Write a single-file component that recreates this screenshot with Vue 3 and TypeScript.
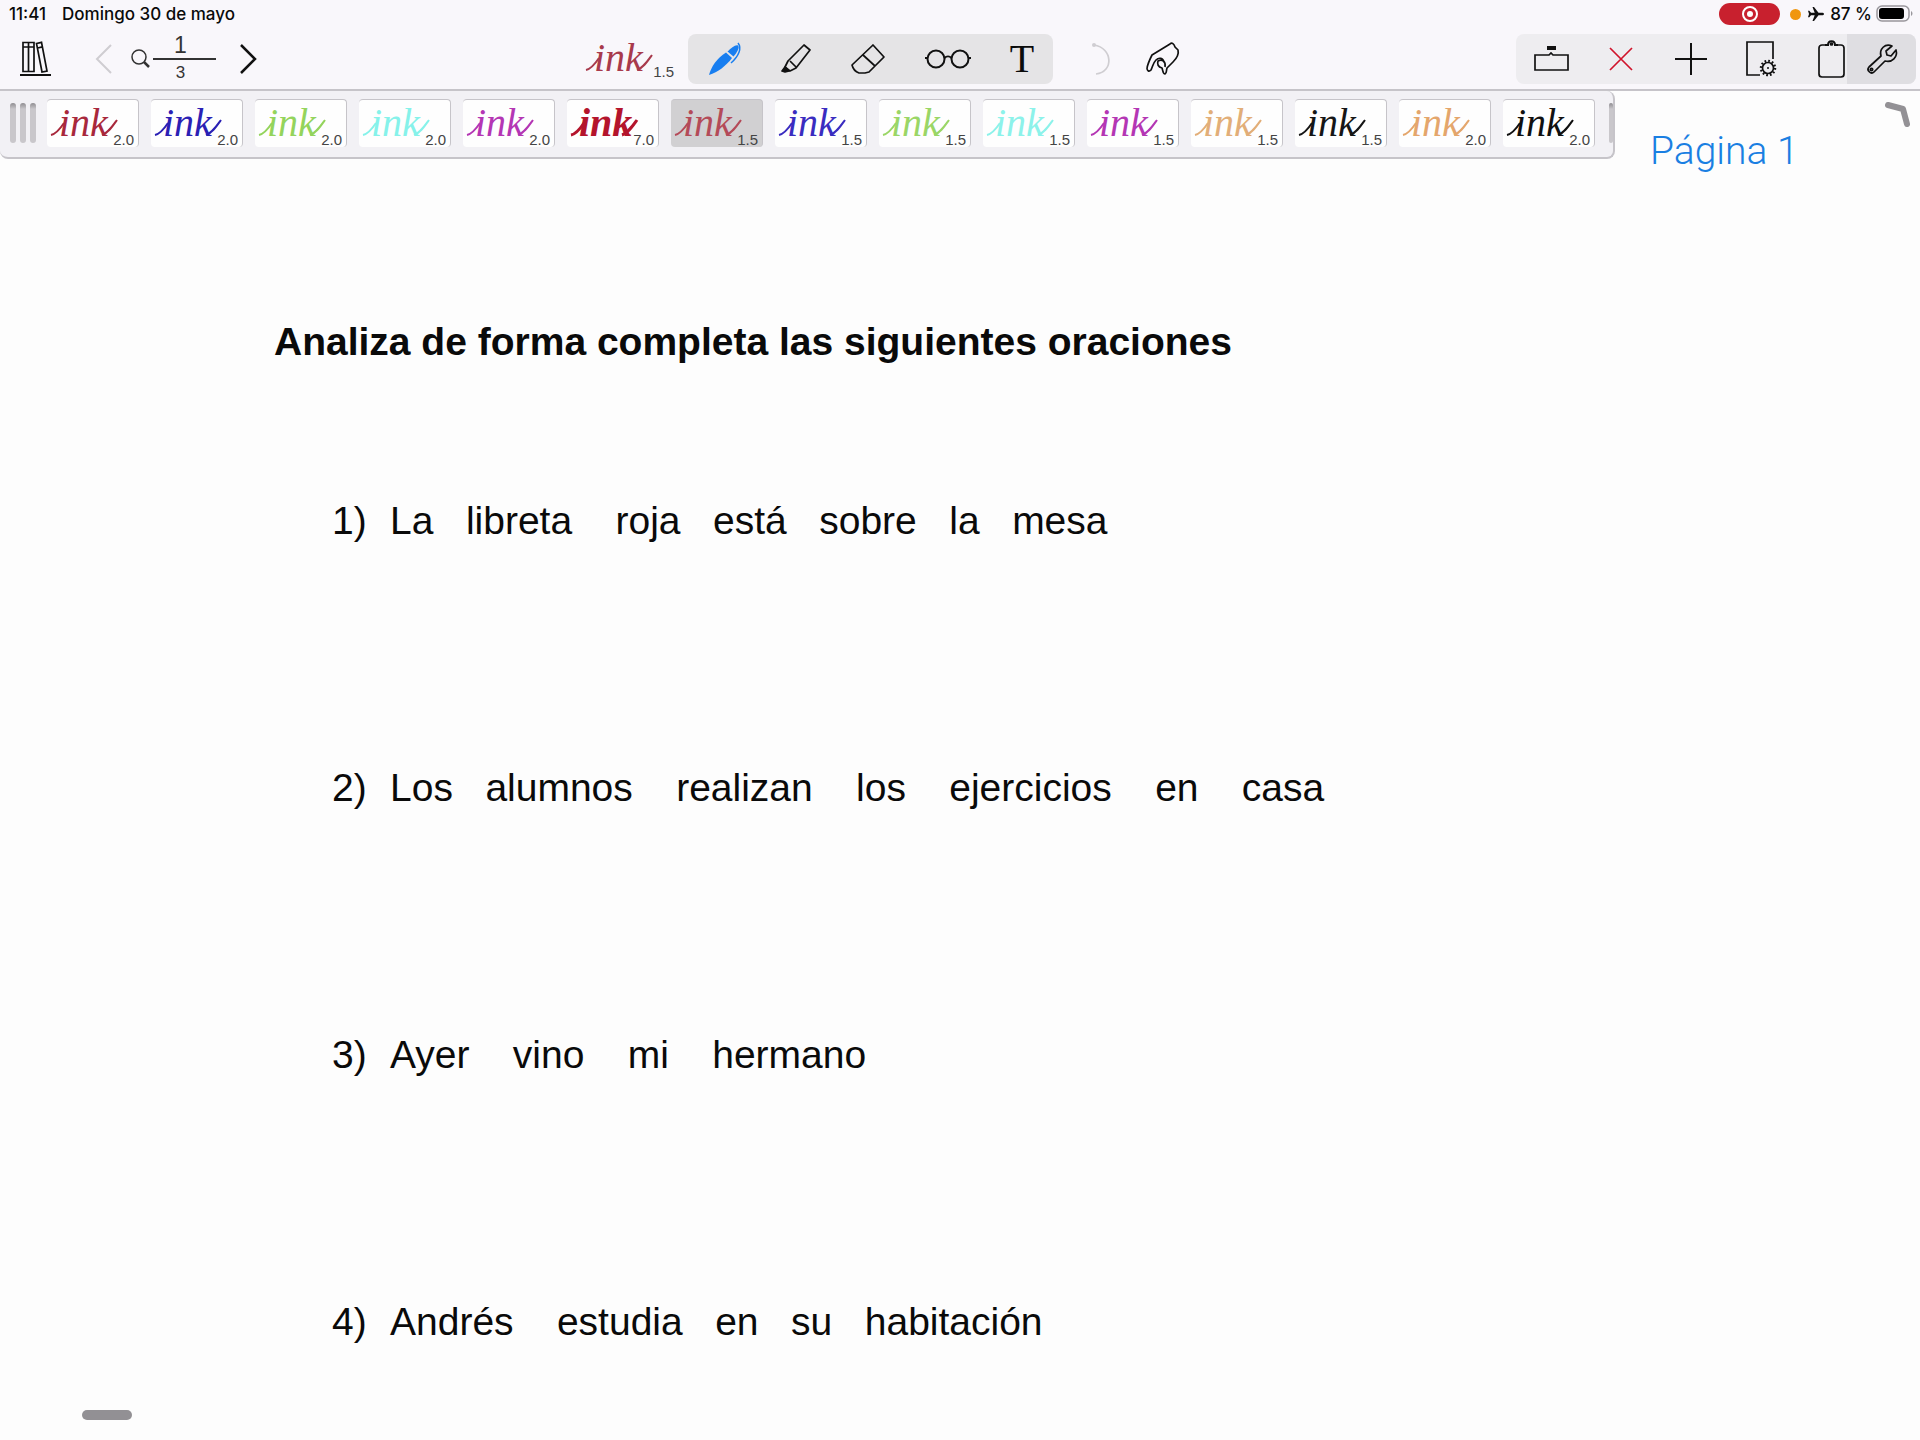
<script setup lang="ts">
import { ref } from 'vue'

interface Pen {
  color: string
  width: string
}

const pens: Pen[] = [
  { color: '#a8283c', width: '2.0' },
  { color: '#2a20b4', width: '2.0' },
  { color: '#94d45c', width: '2.0' },
  { color: '#86f2ea', width: '2.0' },
  { color: '#b436b4', width: '2.0' },
  { color: '#b4142c', width: '7.0' },
  { color: '#b44a58', width: '1.5' },
  { color: '#3a2cc0', width: '1.5' },
  { color: '#9ad666', width: '1.5' },
  { color: '#8cf2ea', width: '1.5' },
  { color: '#b436b4', width: '1.5' },
  { color: '#e2ae78', width: '1.5' },
  { color: '#161616', width: '1.5' },
  { color: '#e4a66c', width: '2.0' },
  { color: '#101010', width: '2.0' },
]

const selected = ref(6)

const sentences: string[] = [
  'La   libreta    roja   está   sobre   la   mesa',
  'Los   alumnos    realizan    los    ejercicios    en    casa',
  'Ayer    vino    mi    hermano',
  'Andrés    estudia   en   su   habitación',
]
</script>

<template>
  <div class="app">
    <header class="top">
      <div class="status">
        <time>11:41</time>
        <span class="date">Domingo 30 de mayo</span>
        <span class="record">
          <svg width="18" height="18" viewBox="0 0 18 18" fill="none" stroke="#fff" stroke-width="2">
            <circle cx="9" cy="9" r="7" /><circle cx="9" cy="9" r="3" fill="#fff" stroke="none" />
          </svg>
        </span>
        <span class="dot"></span>
        <svg class="plane" width="16" height="16" viewBox="0 0 16 16" fill="#111">
          <path d="M16 8c0-.8-1-1.300-2-1.300h-3.500L6 1H4.500l2.200 5.700H3L1.300 4.700H0L1 8l-1 3.300h1.300L3 9.300h3.700L4.500 15H6l4.500-5.700H14c1 0 2-.5 2-1.300z" />
        </svg>
        <span class="percent">87 %</span>
        <svg width="38" height="18" viewBox="0 0 38 18">
          <rect x="1" y="1" width="32" height="15" rx="5" fill="none" stroke="#99979c" stroke-width="1.500" />
          <rect x="3" y="3" width="25" height="11" rx="3" fill="#000" />
          <path d="M35 6c2 1 2 4 0 5z" fill="#99979c" />
        </svg>
      </div>

      <nav class="toolbar">
        <button class="library" aria-label="Biblioteca">
          <svg width="31" height="35" viewBox="0 0 31 35" fill="none" stroke="#111" stroke-width="1.700">
            <path d="M3 1.500h5.500v29H3zM8.500 1.500H14v29H8.500zM3 6h11M16.500 2.500l5-1.200L27 30l-5 1zM17.500 7l5-1.200" />
            <path d="M0 34h31" stroke-width="2" />
          </svg>
        </button>
        <button class="previous" aria-label="Página anterior">
          <svg width="17" height="30" viewBox="0 0 17 30" fill="none" stroke="#cfcdd1" stroke-width="2"><path d="M16 1 2 15l14 14" /></svg>
        </button>
        <button class="pages" aria-label="Buscar página">
          <svg width="19" height="19" viewBox="0 0 19 19" fill="none" stroke="#333" stroke-width="1.500">
            <circle cx="8" cy="8" r="7" /><path d="m13 13 5 5" stroke-width="2.500" />
          </svg>
          <span class="fraction"><span class="current">1</span><span class="total">3</span></span>
        </button>
        <button class="next" aria-label="Página siguiente">
          <svg width="17" height="30" viewBox="0 0 17 30" fill="none" stroke="#111" stroke-width="2.500"><path d="m1 1 14 14L1 29" /></svg>
        </button>

        <button class="sample active-pen">
          <span class="ink">ink</span>
          <svg class="swash" width="66" height="36" viewBox="0 0 66 36" fill="none" stroke="currentColor">
            <path d="M0 31c5-1 9-6 13-12M51 31c6-2 10-8 15-15" />
          </svg>
          <span class="size">1.5</span>
        </button>

        <div class="tools">
          <button aria-label="Pluma">
            <svg width="32" height="32" viewBox="0 0 32 32" fill="#187ef0">
              <path d="M0 32C2 24 8 15 17 9.500l6 5.500C17 23 9 29 0 32z" />
              <path d="M18.500 8.500C22 5 27 1 29 2.500c2 2-1 7-4.500 11z" />
              <path d="M29 0c4 5 1 13-7 20" fill="none" stroke="#187ef0" stroke-width="1.500" />
            </svg>
          </button>
          <button aria-label="Marcador">
            <svg width="30" height="32" viewBox="0 0 30 32" fill="none" stroke="#111" stroke-width="1.700" stroke-linejoin="round">
              <path d="M23 2 7 18l-3 6 5 4 6-3L29 7zM9 18l6 6" />
              <path d="m4 24-3 4 3 1 4-1z" fill="#111" />
            </svg>
          </button>
          <button aria-label="Goma">
            <svg width="34" height="32" viewBox="0 0 34 32" fill="none" stroke="#111" stroke-width="1.700" stroke-linejoin="round">
              <path d="M22 2 1 22c1 4 4 7 7 8h6l4-1 15-15zM12 12l12 11" />
            </svg>
          </button>
          <button aria-label="Lectura">
            <svg width="46" height="20" viewBox="0 0 46 20" fill="none" stroke="#111" stroke-width="2">
              <circle cx="11" cy="10" r="8.500" /><circle cx="35" cy="10" r="8.500" />
              <path d="M19.500 9c2-2 5-2 7 0M0 9h3M43 9h3" />
            </svg>
          </button>
          <button class="letter" aria-label="Texto">T</button>
        </div>

        <button class="undo" aria-label="Deshacer">
          <svg width="20" height="34" viewBox="0 0 20 34" fill="none" stroke="#cfcdd1" stroke-width="1.700">
            <path d="M3 3c19 3 20 27 2 29" /><circle cx="3" cy="3" r="2" fill="#cfcdd1" stroke="none" />
          </svg>
        </button>
        <button class="hand" aria-label="Gestos">
          <svg width="34" height="34" viewBox="0 0 34 34" fill="none" stroke="#111" stroke-width="1.700" stroke-linejoin="round">
            <path d="M1 26C2 21 4 17 6 13L24 2c2-2 4 0 5 3l3 3c1 4-2 9-5 12l-6 6c-1 3 0 5-2 6-2 0-2-3-3-6-4-1-5-4-4-7 4-2 8 0 7 6M10 18c-3 3-3 6-5 10-2 2-4 1-4-2M10 18c3-3 7-2 8 2" />
          </svg>
        </button>

        <div class="actions">
          <button aria-label="Cajón">
            <svg width="35" height="25" viewBox="0 0 35 25" fill="none" stroke="#111" stroke-width="1.700">
              <path d="M1 9h14l2-2 2 2h15v15H1z" /><path d="M13 0h9v4h-9z" fill="#111" stroke="none" />
            </svg>
          </button>
          <button aria-label="Eliminar">
            <svg width="24" height="24" viewBox="0 0 24 24" fill="none" stroke="#d0142c" stroke-width="1.700"><path d="m1 1 22 22M23 1 1 23" /></svg>
          </button>
          <button aria-label="Añadir">
            <svg width="32" height="32" viewBox="0 0 32 32" fill="none" stroke="#111" stroke-width="2"><path d="M16 0v32M0 16h32" /></svg>
          </button>
          <button aria-label="Ajustes de página">
            <svg width="30" height="36" viewBox="0 0 30 36" fill="none" stroke="#111" stroke-width="1.700">
              <path d="M14 34H1V1h26v17" />
              <circle cx="22" cy="27" r="5.500" /><circle cx="22" cy="27" r="7" stroke-width="2.500" stroke-dasharray="1.700 1.965" />
              <circle cx="22" cy="27" r="1" fill="#111" stroke="none" />
            </svg>
          </button>
          <button class="clipboard" aria-label="Portapapeles">
            <svg width="27" height="38" viewBox="0 0 27 38" fill="none" stroke="#111" stroke-width="1.700">
              <path d="M7 5H4a3 3 0 0 0-3 3v26a3 3 0 0 0 3 3h19a3 3 0 0 0 3-3V8a3 3 0 0 0-3-3h-3" />
              <path d="M7 5h3c0-5 7-5 7 0h3" stroke-width="2" /><circle cx="13.500" cy="4" r="1" />
            </svg>
          </button>
          <button class="wrench" aria-label="Herramientas">
            <svg width="30" height="30" viewBox="0 0 30 30" fill="none" stroke="#111" stroke-width="1.700" stroke-linejoin="round">
              <path d="M2 23 14 12C12 5 18-1 25 2l-6 5 1 4 4 1 5-6c2 7-4 13-11 11L7 28c-3 3-8-2-5-5z" />
              <circle cx="4.500" cy="25.500" r="1.200" />
            </svg>
          </button>
        </div>
      </nav>
    </header>

    <div class="strip">
      <div class="palette">
        <div class="grip"><i></i><i></i><i></i></div>
        <button
          v-for="(pen, index) in pens"
          :key="index"
          class="sample card"
          :class="{ selected: index === selected, heavy: pen.width === '7.0' }"
          :style="{ color: pen.color }"
          @click="selected = index"
        >
          <span class="ink">ink</span>
          <svg class="swash" width="66" height="36" viewBox="0 0 66 36" fill="none" stroke="currentColor">
            <path d="M0 31c5-1 9-6 13-12M51 31c6-2 10-8 15-15" />
          </svg>
          <span class="size">{{ pen.width }}</span>
        </button>
        <i class="edge"></i>
      </div>
      <a class="page-link" href="#page-1">Página 1</a>
      <svg class="corner" width="26" height="28" viewBox="0 0 26 28" fill="none" stroke="#939195" stroke-width="6" stroke-linecap="round" stroke-linejoin="round">
        <path d="m4 4 15 4 4 15" />
      </svg>
    </div>

    <main id="page-1" class="paper">
      <h1>Analiza de forma completa las siguientes oraciones</h1>
      <ol>
        <li v-for="(sentence, index) in sentences" :key="index">
          <span class="number">{{ index + 1 }})</span>
          <span>{{ sentence }}</span>
        </li>
      </ol>
    </main>
    <div class="handle"></div>
  </div>
</template>

<style>
body {
  margin: 0;
  background: #fdfdfd;
}
</style>

<style scoped>
.app {
  position: relative;
  min-height: 100vh;
  font-family: "Liberation Sans", Arial, sans-serif;
  color: #0a0a0a;
}

button {
  display: flex;
  flex: none;
  align-items: center;
  justify-content: center;
  padding: 0;
  border: 0;
  background: none;
  font: inherit;
  color: inherit;
}

svg {
  display: block;
  flex: none;
  overflow: visible;
}

.top {
  background: #f9f7fb;
  border-bottom: 2px solid #c6c4c9;
}

.status {
  display: flex;
  align-items: center;
  height: 28px;
  padding: 0 6px 0 9px;
  font: 500 17px/28px Inter, sans-serif;
}

.date {
  margin-left: 16px;
}

.record {
  display: flex;
  align-items: center;
  justify-content: center;
  width: 61px;
  height: 22px;
  margin-left: auto;
  border-radius: 11px;
  background: #c8202e;
}

.dot {
  width: 11px;
  height: 11px;
  margin: 0 7px 0 10px;
  border-radius: 50%;
  background: #f0960e;
}

.percent {
  margin: 0 4px 0 6px;
}

.toolbar {
  display: flex;
  align-items: center;
  height: 61px;
  padding-right: 4px;
}

.library {
  margin-left: 20px;
}

.previous {
  margin-left: 44px;
}

.pages {
  margin-left: 19px;
  gap: 3px;
}

.fraction {
  display: flex;
  flex-direction: column;
  align-items: center;
  width: 63px;
  color: #333;
}

.current {
  width: 100%;
  padding-right: 8px;
  box-sizing: border-box;
  border-bottom: 2px solid #333;
  font-size: 23px;
  line-height: 26px;
}

.total {
  width: 100%;
  padding-right: 8px;
  box-sizing: border-box;
  font-size: 17px;
  line-height: 26px;
}

.next {
  margin-left: 24px;
}

.sample {
  position: relative;
  width: 92px;
  height: 48px;
}

.active-pen {
  width: 96px;
  margin-left: 325px;
  color: #a83a4c;
}

.ink {
  position: absolute;
  left: 12px;
  top: 1px;
  font: italic 40px/44px "Liberation Serif", "Times New Roman", serif;
}

.swash {
  position: absolute;
  left: 4px;
  top: 4px;
  stroke-width: 2px;
}

.size {
  position: absolute;
  right: 4px;
  bottom: 0;
  font-size: 15px;
  line-height: 14px;
  color: #444;
}

.active-pen .size {
  bottom: 4px;
}

.heavy .ink {
  font-weight: bold;
}

.heavy .swash {
  stroke-width: 3px;
}

.tools {
  display: flex;
  align-items: center;
  gap: 40px;
  height: 50px;
  margin-left: 10px;
  padding: 0 20px 0 21px;
  border-radius: 8px;
  background: #e5e4e6;
}

.letter {
  width: 22px;
  font: 40px/44px "Liberation Serif", "Times New Roman", serif;
}

.undo {
  margin-left: 38px;
}

.hand {
  margin-left: 35px;
}

.actions {
  display: flex;
  height: 50px;
  margin-left: auto;
  overflow: hidden;
  border-radius: 8px;
  background: #eeedf0;
}

.actions button {
  width: 70px;
}

.actions .clipboard {
  width: 51px;
  padding-right: 2px;
  justify-content: flex-end;
}

.actions .wrench {
  width: 69px;
  background: #dfdee2;
}

.strip {
  display: flex;
  align-items: flex-start;
}

.palette {
  display: flex;
  flex: none;
  align-items: center;
  gap: 12px;
  height: 64px;
  padding: 0 0 2px 10px;
  border: solid #c6c4c9;
  border-width: 0 2px 2px 0;
  border-radius: 0 8px 8px 8px;
  background: #f2f1f5;
}

.grip {
  display: flex;
  gap: 4px;
  margin-right: -1px;
}

.grip i,
.edge {
  width: 6px;
  height: 40px;
  border-radius: 3px;
  background: linear-gradient(#8f8d91, #c9c7cb 6px);
}

.edge {
  width: 4px;
  margin-left: 2px;
}

.card {
  box-sizing: border-box;
  border-top: 1px solid #c6c4c9;
  border-right: 1px solid #c6c4c9;
  border-radius: 4px;
  background: #fefefe;
}

.card.selected {
  background: #d1d0d2;
}

.page-link {
  margin: 36px 0 0 35px;
  font: 300 39px/48px Roboto, sans-serif;
  color: #1a7fe2;
  text-decoration: none;
}

.corner {
  margin: 10px 10px 0 auto;
}

.paper {
  padding: 143px 48px 0 274px;
}

h1 {
  margin: 0;
  font-size: 39px;
  line-height: 48px;
}

ol {
  margin: 131px 0 0;
  padding: 0 0 0 58px;
  list-style: none;
}

li {
  display: flex;
  margin-bottom: 219px;
  font-size: 39px;
  line-height: 48px;
  white-space: pre;
}

li:last-child {
  margin-bottom: 0;
}

.number {
  width: 58px;
}

.handle {
  position: absolute;
  left: 82px;
  bottom: 20px;
  width: 50px;
  height: 10px;
  border-radius: 5px;
  background: #929094;
}
</style>
